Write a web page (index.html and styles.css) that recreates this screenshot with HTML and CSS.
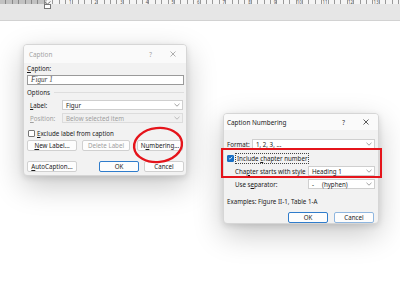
FILE: index.html
```html
<!DOCTYPE html>
<html lang="en">
<head>
  <meta charset="UTF-8">
  <meta name="viewport" content="width=device-width, initial-scale=1.0">
  <title>Caption Numbering</title>
  <link rel="stylesheet" href="styles.css">
</head>
<body>
  <div class="ribbon">
    <div class="ruler">
      <div class="ruler-margin"></div>
      <div class="ruler-page">
        <span>1</span><span>2</span><span>3</span><span>4</span><span>5</span><span>6</span><span>7</span>
        <span>8</span><span>9</span><span>10</span><span>11</span><span>12</span><span>13</span>
      </div>
      <svg class="indent" width="7" height="8" viewBox="0 0 7 8">
        <path d="M0.5 0.5 L3.5 3 L6.5 0.5" fill="#fff" stroke="#777" stroke-width="1"/>
        <rect x="0.5" y="3.5" width="6" height="4" fill="#fff" stroke="#777" stroke-width="1"/>
      </svg>
    </div>
  </div>

  <div class="doc">
    <!-- Caption dialog (inactive) -->
    <div class="dialog caption-dlg">
      <div class="titlebar">
        <span class="title">Caption</span>
        <span class="help">?</span>
        <svg class="close" width="6" height="6" viewBox="0 0 6 6"><path d="M0.5 0.5 L5.5 5.5 M5.5 0.5 L0.5 5.5" stroke="#9a9a9a" stroke-width="0.8"/></svg>
      </div>
      <div class="dlg-body">
        <div class="line-label"><u>C</u>aption:</div>
        <div class="textbox"><i>Figur 1</i></div>
        <div class="group"><span>Options</span><div class="rule"></div></div>
        <div class="field">
          <span class="field-name"><u>L</u>abel:</span>
          <div class="select wide"><span>Figur</span><svg width="6" height="4" viewBox="0 0 6 4"><path d="M0.5 0.8 L3 3.2 L5.5 0.8" fill="none" stroke="#888" stroke-width="0.8"/></svg></div>
        </div>
        <div class="field disabled">
          <span class="field-name"><u>P</u>osition:</span>
          <div class="select wide"><span>Below selected item</span><svg width="6" height="4" viewBox="0 0 6 4"><path d="M0.5 0.8 L3 3.2 L5.5 0.8" fill="none" stroke="#aaa" stroke-width="0.8"/></svg></div>
        </div>
        <div class="check"><span class="box"></span><span><u>E</u>xclude label from caption</span></div>
        <div class="btn-row">
          <span class="btn w50"><u>N</u>ew Label...</span>
          <span class="btn w48 off">Delete Label</span>
          <span class="btn w46">N<u>u</u>mbering...</span>
        </div>
        <div class="btn-row bottom">
          <span class="btn w50"><u>A</u>utoCaption...</span>
          <span class="spacer"></span>
          <span class="btn w40 default">OK</span>
          <span class="btn w40">Cancel</span>
        </div>
      </div>
    </div>

    <!-- Caption Numbering dialog (active) -->
    <div class="dialog numbering-dlg">
      <div class="titlebar">
        <span class="title active">Caption Numbering</span>
        <span class="help dark">?</span>
        <svg class="close" width="6" height="6" viewBox="0 0 6 6"><path d="M0.5 0.5 L5.5 5.5 M5.5 0.5 L0.5 5.5" stroke="#333" stroke-width="0.8"/></svg>
      </div>
      <div class="dlg-body">
        <div class="field">
          <span class="field-name short"><u>F</u>ormat:</span>
          <div class="select fmt"><span>1, 2, 3, ...</span><svg width="6" height="4" viewBox="0 0 6 4"><path d="M0.5 0.8 L3 3.2 L5.5 0.8" fill="none" stroke="#888" stroke-width="0.8"/></svg></div>
        </div>
        <div class="check checked">
          <span class="box"><svg width="6" height="6" viewBox="0 0 6 6"><path d="M1 3.2 L2.4 4.5 L5 1.5" fill="none" stroke="#fff" stroke-width="0.9"/></svg></span>
          <span class="focus">Include <u>c</u>hapter number</span>
        </div>
        <div class="field sub">
          <span class="field-name long">Cha<u>p</u>ter starts with style</span>
          <div class="select narrow"><span>Heading 1</span><svg width="6" height="4" viewBox="0 0 6 4"><path d="M0.5 0.8 L3 3.2 L5.5 0.8" fill="none" stroke="#888" stroke-width="0.8"/></svg></div>
        </div>
        <div class="field sub sep">
          <span class="field-name long">Use s<u>e</u>parator:</span>
          <div class="select narrow"><span>-&nbsp;&nbsp;&nbsp;&nbsp;&nbsp;(hyphen)</span><svg width="6" height="4" viewBox="0 0 6 4"><path d="M0.5 0.8 L3 3.2 L5.5 0.8" fill="none" stroke="#888" stroke-width="0.8"/></svg></div>
        </div>
        <div class="examples"><span class="ex-label">Examples:</span><span>Figure II-1, Table 1-A</span></div>
        <div class="btn-row end">
          <span class="btn w40 default">OK</span>
          <span class="btn w40 soft">Cancel</span>
        </div>
      </div>
    </div>

    <!-- red markup drawn over the screenshot -->
    <svg class="mark-ellipse" width="54" height="40" viewBox="0 0 54 40">
      <ellipse cx="27" cy="20" rx="24" ry="17" fill="none" stroke="#e5141b" stroke-width="2.4" transform="rotate(-6 27 20)"/>
    </svg>
    <div class="mark-rect"></div>
  </div>
</body>
</html>
```

FILE: styles.css
```css
body {
  margin: 0;
  padding: 0;
  width: 400px;
  height: 298px;
  overflow: hidden;
  background: #fff;
  font-family: "Noto Sans", "Open Sans", sans-serif;
  font-size: 6.2px;
  color: #1b1b1b;
}

.ribbon {
  height: 20px;
  background-color: #e6e6e6;
  border-bottom: 1px solid #d2d2d2;
}

.ruler {
  position: relative;
  display: flex;
  height: 4px;
}

.ruler-margin {
  width: 47px;
  background: repeating-linear-gradient(90deg, #c2c2c2 0, #c2c2c2 5.4px, #888 5.4px, #888 6.4px);
}

.ruler-page {
  flex: 1;
  display: flex;
  background: repeating-linear-gradient(90deg, #f4f4f4 0, #f4f4f4 5.4px, #999 5.4px, #999 6.4px);
}

.ruler-page span {
  width: 25.6px;
  text-align: right;
  font-size: 4.5px;
  line-height: 4px;
  color: #555;
  padding-right: 1px;
  box-sizing: border-box;
}

.indent {
  position: absolute;
  left: 44px;
  top: 1px;
}

.doc {
  position: relative;
  height: 277px;
}

.dialog {
  position: absolute;
  box-sizing: border-box;
  background-color: #f2f2f2;
  border: 1px solid #d6d6d6;
  border-radius: 4px;
  box-shadow: 0 10px 30px rgba(0, 0, 0, 0.22), 0 2px 6px rgba(0, 0, 0, 0.12);
  overflow: hidden;
}

.caption-dlg {
  left: 23px;
  top: 23px;
  width: 164px;
  height: 132px;
}

.numbering-dlg {
  left: 223px;
  top: 92px;
  width: 156px;
  height: 111px;
}

.titlebar {
  display: flex;
  align-items: center;
  height: 18px;
  padding: 0 10px 0 5px;
  background-color: #fafafa;
}

.numbering-dlg .titlebar {
  height: 16px;
  padding: 0 9px 0 3px;
}

.title {
  flex: 1;
  color: #a2a2a2;
  font-size: 6.4px;
}

.title.active {
  color: #1b1b1b;
}

.help {
  color: #a2a2a2;
  margin-right: 18px;
}

.help.dark {
  color: #333;
}

.dlg-body {
  display: flex;
  flex-direction: column;
  padding: 2px 2px 0 3px;
}

.numbering-dlg .dlg-body {
  padding: 5px 3px 0 3px;
}

u {
  text-decoration-thickness: 0.5px;
  text-underline-offset: 0.8px;
}

.line-label {
  height: 8px;
  line-height: 8px;
}

.textbox {
  margin-top: 2px;
  height: 10px;
  width: 157px;
  box-sizing: border-box;
  background: #fff;
  border: 1px solid #9a9a9a;
  padding-left: 3px;
  line-height: 8px;
  font-family: "Liberation Serif", serif;
  font-size: 7.2px;
  color: #444;
}

.group {
  display: flex;
  align-items: center;
  margin-top: 3px;
  height: 8px;
  gap: 4px;
}

.rule {
  flex: 1;
  height: 1px;
  background-color: #dedede;
}

.field {
  display: flex;
  align-items: center;
  margin-top: 4px;
  height: 10px;
}

.field.disabled {
  margin-top: 3px;
  color: #a0a0a0;
}

.field-name {
  width: 35px;
  padding-left: 3px;
  box-sizing: border-box;
}

.field-name.short {
  width: 25px;
  padding-left: 0;
}

.field-name.long {
  width: 73px;
  padding-left: 0;
}

.select {
  display: flex;
  align-items: center;
  height: 10px;
  box-sizing: border-box;
  background: #fff;
  border: 1px solid #cfcfcf;
  padding-left: 3px;
}

.select span {
  flex: 1;
}

.select svg {
  margin: 0 2px;
}

.select.wide {
  width: 121px;
}

.field.disabled .select {
  background: #f0f0f0;
  border-color: #dcdcdc;
}

.select.fmt {
  width: 123px;
}

.select.narrow {
  width: 67px;
}

.check {
  display: flex;
  align-items: center;
  gap: 2px;
  margin-top: 6px;
  height: 8px;
}

.box {
  display: flex;
  align-items: center;
  justify-content: center;
  width: 7px;
  height: 7px;
  box-sizing: border-box;
  margin-left: 1px;
  border: 1px solid #777;
  border-radius: 1px;
  background: #fff;
}

.check.checked {
  margin-top: 5px;
}

.check.checked .box {
  margin-left: 0;
  border-color: #1a6fc4;
  background-color: #1a6fc4;
}

.focus {
  outline: 1px dotted #444;
  padding: 0 1px;
}

.field.sub {
  padding-left: 8px;
  margin-top: 4px;
}

.field.sub.sep {
  margin-top: 3px;
}

.btn-row {
  display: flex;
  align-items: center;
  gap: 5px;
  margin-top: 3px;
  height: 11px;
}

.btn-row.bottom {
  margin-top: 10px;
}

.btn-row.end {
  justify-content: flex-end;
  gap: 6px;
  margin-top: 6px;
  padding-right: 1px;
}

.spacer {
  flex: 1;
}

.btn {
  display: flex;
  align-items: center;
  justify-content: center;
  height: 11px;
  box-sizing: border-box;
  background: #fdfdfd;
  border: 1px solid #d0d0d0;
  border-radius: 2px;
}

.btn.off {
  color: #a0a0a0;
}

.btn.default {
  border-color: #2f7ccb;
}

.btn.soft {
  border-color: #8fb6df;
}

.w50 { width: 50px; }
.w48 { width: 48px; margin-left: 0; }
.w46 { width: 46px; margin-left: 2px; }
.w40 { width: 40px; }

.examples {
  display: flex;
  margin-top: 9px;
  height: 8px;
  line-height: 8px;
}

.ex-label {
  width: 31px;
}

.mark-ellipse {
  position: absolute;
  left: 131px;
  top: 104px;
}

.mark-rect {
  position: absolute;
  left: 221px;
  top: 127px;
  width: 161px;
  height: 30px;
  box-sizing: border-box;
  border: 2.5px solid #e5141b;
}
```
